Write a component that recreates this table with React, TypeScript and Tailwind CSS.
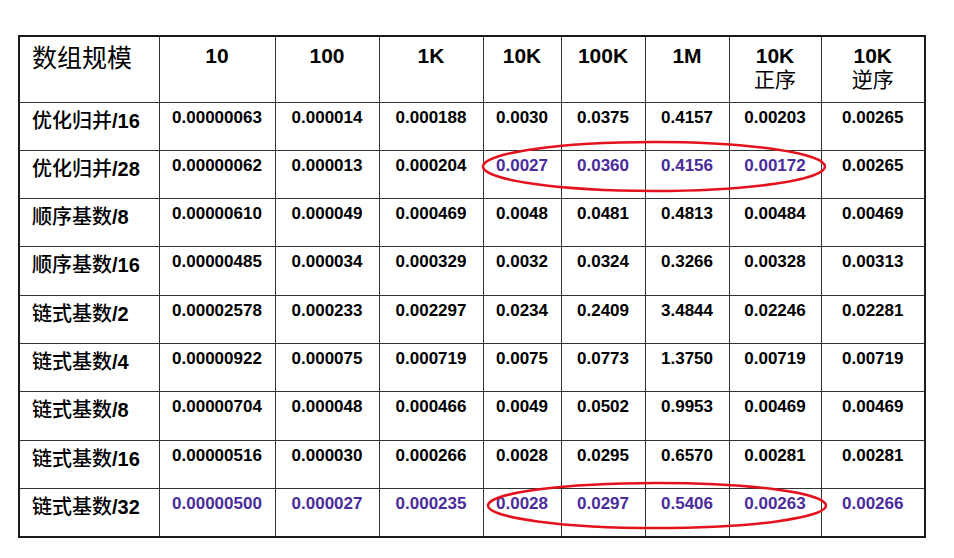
import React from "react";

const widths = [140, 116, 104, 104, 78, 84, 84, 92, 104];

type Row = { cn: string; num: string; vals: string[]; purple: boolean[] };

const P = (n: number[]) => Array.from({ length: 8 }, (_, i) => n.includes(i));

const rows: Row[] = [
  { cn: "优化归并", num: "/16", vals: ["0.00000063", "0.000014", "0.000188", "0.0030", "0.0375", "0.4157", "0.00203", "0.00265"], purple: P([]) },
  { cn: "优化归并", num: "/28", vals: ["0.00000062", "0.000013", "0.000204", "0.0027", "0.0360", "0.4156", "0.00172", "0.00265"], purple: P([3, 4, 5, 6]) },
  { cn: "顺序基数", num: "/8", vals: ["0.00000610", "0.000049", "0.000469", "0.0048", "0.0481", "0.4813", "0.00484", "0.00469"], purple: P([]) },
  { cn: "顺序基数", num: "/16", vals: ["0.00000485", "0.000034", "0.000329", "0.0032", "0.0324", "0.3266", "0.00328", "0.00313"], purple: P([]) },
  { cn: "链式基数", num: "/2", vals: ["0.00002578", "0.000233", "0.002297", "0.0234", "0.2409", "3.4844", "0.02246", "0.02281"], purple: P([]) },
  { cn: "链式基数", num: "/4", vals: ["0.00000922", "0.000075", "0.000719", "0.0075", "0.0773", "1.3750", "0.00719", "0.00719"], purple: P([]) },
  { cn: "链式基数", num: "/8", vals: ["0.00000704", "0.000048", "0.000466", "0.0049", "0.0502", "0.9953", "0.00469", "0.00469"], purple: P([]) },
  { cn: "链式基数", num: "/16", vals: ["0.00000516", "0.000030", "0.000266", "0.0028", "0.0295", "0.6570", "0.00281", "0.00281"], purple: P([]) },
  { cn: "链式基数", num: "/32", vals: ["0.00000500", "0.000027", "0.000235", "0.0028", "0.0297", "0.5406", "0.00263", "0.00266"], purple: P([0, 1, 2, 3, 4, 5, 6, 7]) },
];

const headers: { main: string; sub?: string }[] = [
  { main: "10" },
  { main: "100" },
  { main: "1K" },
  { main: "10K" },
  { main: "100K" },
  { main: "1M" },
  { main: "10K", sub: "正序" },
  { main: "10K", sub: "逆序" },
];

export default function App() {
  return (
    <div
      className="relative w-[954px] h-[558px] bg-white text-black overflow-hidden"
      style={{ fontFamily: "'Liberation Sans', 'Noto Sans CJK SC', sans-serif" }}
    >
      <div className="pt-[35px] pl-[18px]">
        <table className="table-fixed border-collapse border-2 border-[#1a1a1a]">
          <colgroup>
            {widths.map((w, i) => (
              <col key={i} style={{ width: w }} />
            ))}
          </colgroup>
          <thead>
            <tr className="h-[66px]">
              <th className="border-[1.5px] border-[#333] align-top text-left pl-[12px] pt-[6px] font-normal text-[25px] leading-[30px]">
                数组规模
              </th>
              {headers.map((h, i) => (
                <th key={i} className="border-[1.5px] border-[#333] align-top text-center pt-[6px]">
                  <div className="font-bold text-[21px] leading-[25px]">{h.main}</div>
                  {h.sub && <div className="font-normal text-[21px] leading-[24px]">{h.sub}</div>}
                </th>
              ))}
            </tr>
          </thead>
          <tbody>
            {rows.map((r, ri) => (
              <tr key={ri} className="h-[48.3px]">
                <td className="border-[1.5px] border-[#333] align-top pl-[12px] pt-[6px] text-[20px] leading-[24px] whitespace-nowrap">
                  <span className="font-medium">{r.cn}</span>
                  <span className="font-bold">{r.num}</span>
                </td>
                {r.vals.map((v, vi) => (
                  <td
                    key={vi}
                    className={`border-[1.5px] border-[#333] align-top text-center pt-[5px] font-bold text-[17px] leading-[20px] ${
                      r.purple[vi] ? "text-[#4a2c9c]" : "text-black"
                    }`}
                  >
                    {v}
                  </td>
                ))}
              </tr>
            ))}
          </tbody>
        </table>
      </div>
      <svg className="absolute left-0 top-0 pointer-events-none" width={954} height={558}>
        <ellipse cx={654} cy={166.5} rx={171} ry={24.5} fill="none" stroke="#e3121c" strokeWidth={2.5} />
        <ellipse cx={657} cy={505.5} rx={169} ry={22.5} fill="none" stroke="#e3121c" strokeWidth={2.5} />
      </svg>
    </div>
  );
}
